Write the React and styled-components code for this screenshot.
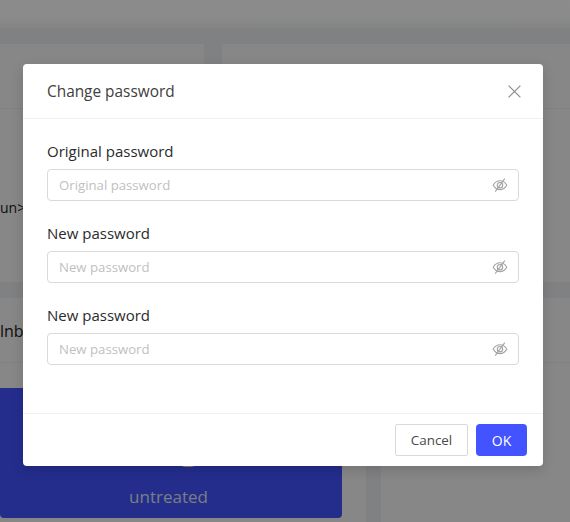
import styled, { createGlobalStyle } from "styled-components";

const FIELDS = [
  { label: "Original password", placeholder: "Original password" },
  { label: "New password", placeholder: "New password" },
  { label: "New password", placeholder: "New password" },
];

function EyeOff() {
  return (
    <svg width="16" height="16" viewBox="0 0 16 16" fill="none" stroke="#a3a3a3" strokeWidth="1.1">
      <path d="M1.2 8.2C3 5.2 5.3 3.8 8 3.8s5 1.4 6.8 4.4c-1.8 3-4.100 4.400-6.800 4.400s-5-1.400-6.800-4.400z" />
      <circle cx="8" cy="8.200" r="2.700" />
      <path d="M3.200 14.600 12.800 1.600" />
    </svg>
  );
}

export default function App() {
  return (
    <>
      <GlobalStyle />
      <Page>
        <TopBar />
        <Row $height="238px" $left="204px" $gap="18px">
          <Card>
            <CardHead $height="65px" />
            <CardText>un&gt;</CardText>
          </Card>
          <Card>
            <CardHead $height="65px" />
          </Card>
        </Row>
        <Row $height="224px" $left="366px" $gap="15px">
          <Card>
            <CardHead $height="65px">
              <RowText>lnb</RowText>
            </CardHead>
            <BlueTile>
              <BigGlyph>g</BigGlyph>
              <TileLabel>untreated</TileLabel>
            </BlueTile>
          </Card>
          <Card>
            <CardHead $height="65px" />
          </Card>
        </Row>
        <Overlay />
        <Modal>
          <ModalHeader>
            <ModalTitle>Change password</ModalTitle>
            <CloseButton type="button" aria-label="Close">
              <svg width="13" height="13" viewBox="0 0 13 13" stroke="#8c8c8c" strokeWidth="1.2">
                <path d="M.6.6l11.800 11.800M12.400.6.600 12.400" />
              </svg>
            </CloseButton>
          </ModalHeader>
          <ModalBody>
            {FIELDS.map((field, i) => (
              <Field key={i}>
                <FieldLabel>{field.label}</FieldLabel>
                <InputWrap>
                  <Input type="password" placeholder={field.placeholder} />
                  <EyeOff />
                </InputWrap>
              </Field>
            ))}
          </ModalBody>
          <ModalFooter>
            <CancelButton type="button">Cancel</CancelButton>
            <OkButton type="button">OK</OkButton>
          </ModalFooter>
        </Modal>
      </Page>
    </>
  );
}

const GlobalStyle = createGlobalStyle`
  html, body {
    margin: 0;
    padding: 0;
    background: #fff;
  }
  body {
    font-family: "Open Sans", "Noto Sans", sans-serif;
  }
`;

const Page = styled.div`
  position: relative;
  width: 570px;
  height: 522px;
  overflow: hidden;
  background: #e9ebee;
  display: flex;
  flex-direction: column;
  gap: 16px;
`;

const TopBar = styled.div`
  height: 28px;
  flex: none;
  background: linear-gradient(180deg, #ffffff 0%, #fdfdfd 60%, #f0f1f1 100%);
`;

const Row = styled.div`
  height: ${({ $height }) => $height};
  flex: none;
  display: grid;
  grid-template-columns: ${({ $left }) => $left} 1fr;
  column-gap: ${({ $gap }) => $gap};
`;

const Card = styled.div`
  background: #f6f6f6;
  display: flex;
  flex-direction: column;
  min-width: 0;
`;

const CardHead = styled.div`
  height: ${({ $height }) => $height};
  box-sizing: border-box;
  border-bottom: 1px solid #ececec;
  flex: none;
  display: flex;
  align-items: center;
`;

const CardText = styled.div`
  margin-top: 89px;
  font-size: 14px;
  line-height: 20px;
  color: #1a1a1a;
`;

const RowText = styled.div`
  font-size: 16px;
  color: #1a1a1a;
  margin-top: 2px;
`;

const BlueTile = styled.div`
  width: 342px;
  height: 130px;
  margin-top: 25px;
  background: #4353ff;
  border-radius: 0 0 4px 4px;
  display: flex;
  flex-direction: column;
  align-items: center;
`;

const BigGlyph = styled.div`
  height: 97px;
  font-size: 44px;
  line-height: 50px;
  padding: 26px 0 0 36px;
  box-sizing: border-box;
  color: #ffe7ba;
`;

const TileLabel = styled.div`
  font-size: 17px;
  line-height: 24px;
  color: #dce4f0;
  margin-left: -5px;
`;

const Overlay = styled.div`
  position: absolute;
  inset: 0;
  background: rgba(0, 0, 0, 0.45);
`;

const Modal = styled.div`
  position: absolute;
  left: 23px;
  top: 64px;
  width: 520px;
  height: 402px;
  background: #fff;
  border-radius: 4px;
  box-shadow: 0 4px 12px rgba(0, 0, 0, 0.15);
  display: flex;
  flex-direction: column;
`;

const ModalHeader = styled.div`
  height: 55px;
  box-sizing: border-box;
  flex: none;
  padding: 0 22px 0 24px;
  border-bottom: 1px solid #f0f0f0;
  display: flex;
  align-items: center;
  justify-content: space-between;
`;

const ModalTitle = styled.div`
  font-size: 15.4px;
  font-weight: 500;
  color: #404040;
`;

const CloseButton = styled.button`
  border: 0;
  background: none;
  padding: 0;
  display: flex;
`;

const ModalBody = styled.div`
  flex: 1;
  padding: 22px 24px 0;
  display: flex;
  flex-direction: column;
  gap: 22px;
`;

const Field = styled.div`
  display: flex;
  flex-direction: column;
  gap: 7px;
`;

const FieldLabel = styled.label`
  font-size: 15px;
  line-height: 21px;
  color: #2b2b2b;
`;

const InputWrap = styled.div`
  height: 32px;
  box-sizing: border-box;
  border: 1px solid #d9d9d9;
  border-radius: 4px;
  padding: 0 10px 0 11px;
  display: flex;
  align-items: center;
  background: #fff;
`;

const Input = styled.input`
  flex: 1;
  min-width: 0;
  border: 0;
  outline: 0;
  padding: 0;
  font: inherit;
  font-size: 13.2px;
  color: #333;

  &::placeholder {
    color: #bfbfbf;
    opacity: 1;
  }
`;

const ModalFooter = styled.div`
  height: 53px;
  box-sizing: border-box;
  flex: none;
  border-top: 1px solid #f0f0f0;
  padding: 0 16px;
  display: flex;
  align-items: center;
  justify-content: flex-end;
  gap: 8px;
`;

const CancelButton = styled.button`
  width: 73px;
  height: 32px;
  border: 1px solid #d9d9d9;
  border-radius: 2px;
  background: #fff;
  font: inherit;
  font-size: 13.4px;
  color: #4a4a4a;
`;

const OkButton = styled.button`
  width: 51px;
  height: 32px;
  border: 0;
  border-radius: 4px;
  background: #4353ff;
  font: inherit;
  font-size: 14px;
  color: #fff;
`;
